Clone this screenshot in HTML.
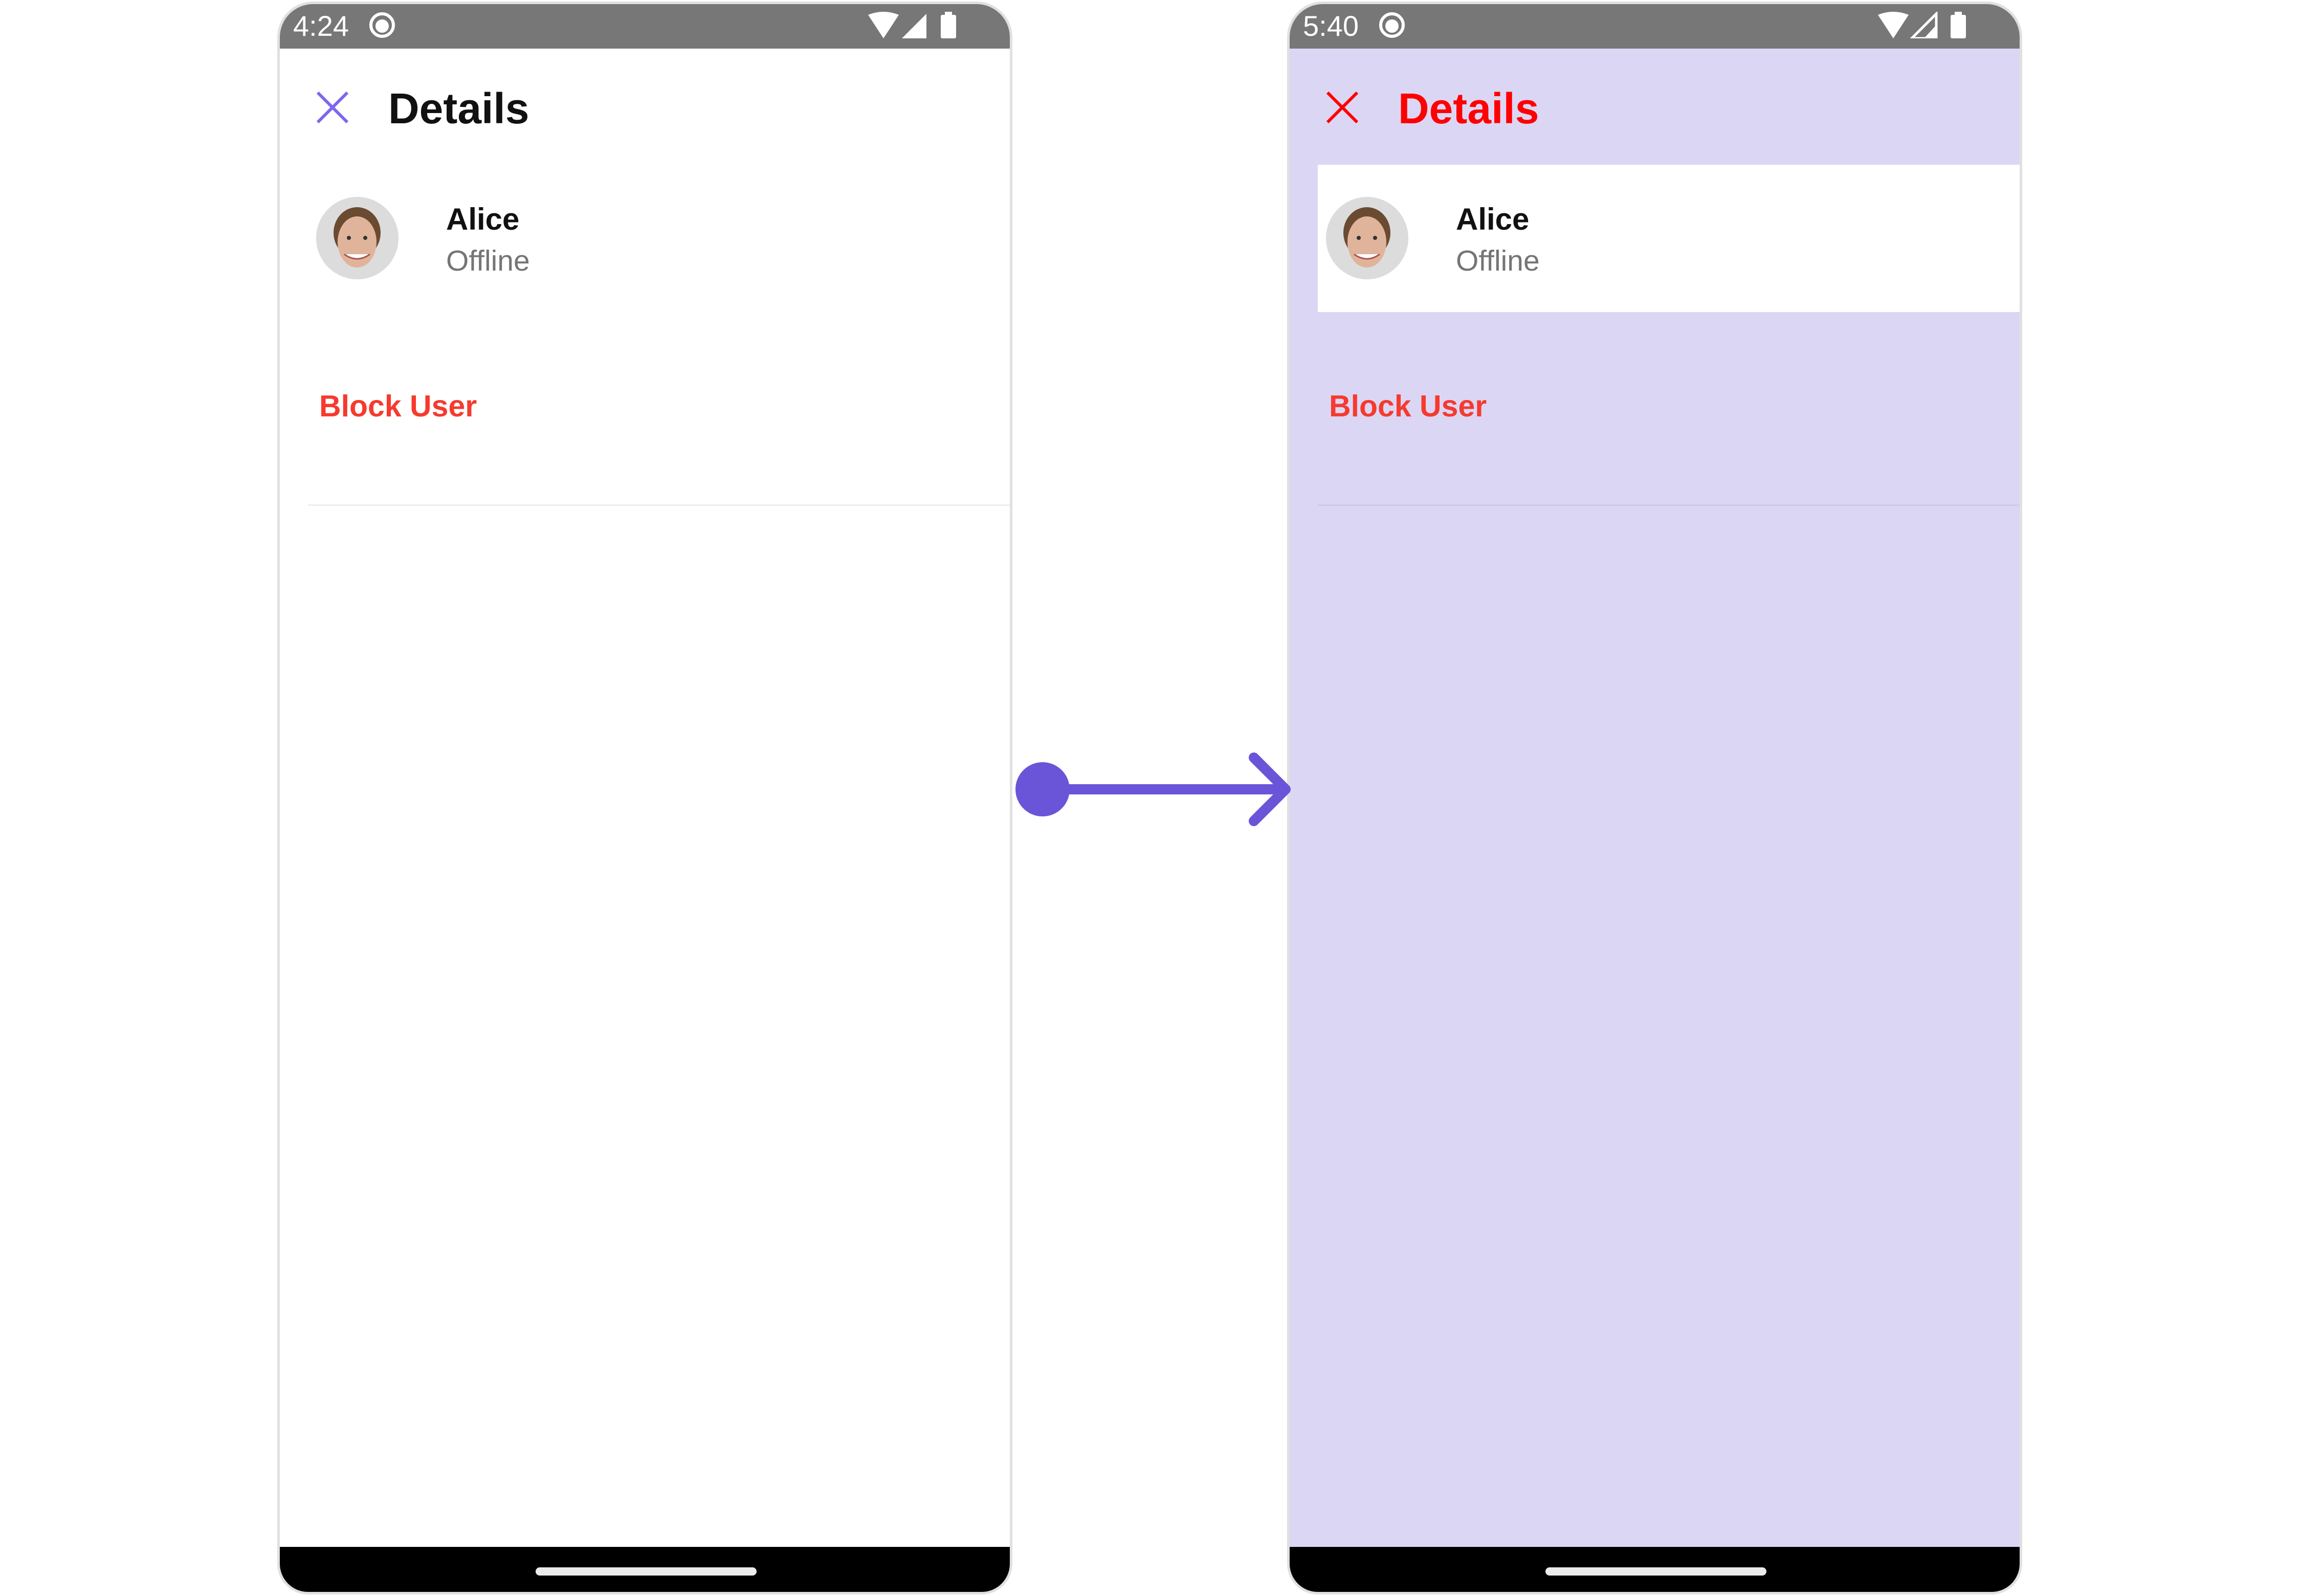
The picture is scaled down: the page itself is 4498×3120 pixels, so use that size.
<!DOCTYPE html>
<html><head><meta charset="utf-8"><style>
*{margin:0;padding:0;box-sizing:border-box}
body{width:4498px;height:3120px;background:#fff;position:relative;overflow:hidden;font-family:"Liberation Sans",Roboto,sans-serif}
.ph{position:absolute;top:3px;width:1437px;height:3114px;border:5px solid #e0e0e0;border-radius:70px 70px 60px 60px;overflow:hidden}
.sb{position:absolute;left:0;top:0;right:0;height:87px;background:#777}
.time{position:absolute;left:26px;top:10px;color:#fff;font-size:56px}
.nav{position:absolute;left:0;right:0;bottom:0;height:88px;background:#000}
.hi{position:absolute;left:500px;top:40px;width:432px;height:16px;border-radius:8px;background:#ebebeb}
.ab{position:absolute}
.title{position:absolute;left:212px;top:156px;font-size:84px;font-weight:bold}
.name{position:absolute;left:325px;top:386px;font-size:60px;font-weight:bold;color:#111}
.st{position:absolute;left:325px;top:469px;font-size:57px;color:#757575}
.blk{position:absolute;left:77px;top:752px;font-size:59px;font-weight:bold;color:#f63a2e}
.div{position:absolute;left:55px;right:0;top:978px;height:3px;background:#eee}
.av{position:absolute;left:71px;top:377px;width:161px;height:161px;border-radius:50%;background:#ddd;overflow:hidden}
</style></head><body>

<!-- LEFT PHONE -->
<div class="ph" style="left:542px;background:#fff">
 <div class="sb">
  <div class="time">4:24</div>
  <svg class="ab" style="left:174px;top:15px" width="52" height="52" viewBox="0 0 52 52"><circle cx="26" cy="26" r="22" fill="none" stroke="#fff" stroke-width="6"/><circle cx="26" cy="28" r="13" fill="#fff"/></svg>
  <svg class="ab" style="left:1148px;top:15px" width="180" height="52" viewBox="0 0 180 52"><path d="M2 6 Q32 -6 62 6 L32 52Z" fill="#fff"/><path d="M68 52 L116 52 L116 4Z" fill="#fff"/><rect x="144" y="6" width="30" height="46" rx="3" fill="#fff"/><rect x="152" y="0" width="14" height="8" fill="#fff"/></svg>
 </div>
 <svg class="ab" style="left:71px;top:170px" width="64" height="64" viewBox="0 0 64 64"><path d="M3 3L61 61M61 3L3 61" stroke="#7b68ee" stroke-width="6"/></svg>
 <div class="title" style="color:#111">Details</div>
 <div class="av"><svg width="161" height="161" viewBox="0 0 161 161"><rect width="161" height="161" fill="#dcdcdc"/><ellipse cx="80" cy="70" rx="46" ry="50" fill="#6b4a32"/><ellipse cx="80" cy="88" rx="38" ry="50" fill="#e0b49a"/><path d="M55 112 Q80 130 105 112" fill="#fff" stroke="#a55" stroke-width="3"/><circle cx="64" cy="80" r="4" fill="#333"/><circle cx="96" cy="80" r="4" fill="#333"/></svg></div>
 <div class="name">Alice</div>
 <div class="st">Offline</div>
 <div class="blk">Block User</div>
 <div class="div"></div>
 <div class="nav"><div class="hi"></div></div>
</div>

<!-- RIGHT PHONE -->
<div class="ph" style="left:2516px;background:#dcd6f5">
 <div class="sb">
  <div class="time">5:40</div>
  <svg class="ab" style="left:174px;top:15px" width="52" height="52" viewBox="0 0 52 52"><circle cx="26" cy="26" r="22" fill="none" stroke="#fff" stroke-width="6"/><circle cx="26" cy="28" r="13" fill="#fff"/></svg>
  <svg class="ab" style="left:1148px;top:15px" width="180" height="52" viewBox="0 0 180 52"><path d="M2 6 Q32 -6 62 6 L32 52Z" fill="#fff"/><path d="M68 52 L116 52 L116 4Z" fill="none" stroke="#fff" stroke-width="5"/><path d="M92 52 L116 52 L116 26Z" fill="#fff"/><rect x="144" y="6" width="30" height="46" rx="3" fill="#fff"/><rect x="152" y="0" width="14" height="8" fill="#fff"/></svg>
 </div>
 <svg class="ab" style="left:71px;top:170px" width="64" height="64" viewBox="0 0 64 64"><path d="M3 3L61 61M61 3L3 61" stroke="#f00" stroke-width="6"/></svg>
 <div class="title" style="color:#f00">Details</div>
 <div class="ab" style="left:55px;top:314px;right:0;height:288px;background:#fff"></div>
 <div class="av"><svg width="161" height="161" viewBox="0 0 161 161"><rect width="161" height="161" fill="#dcdcdc"/><ellipse cx="80" cy="70" rx="46" ry="50" fill="#6b4a32"/><ellipse cx="80" cy="88" rx="38" ry="50" fill="#e0b49a"/><path d="M55 112 Q80 130 105 112" fill="#fff" stroke="#a55" stroke-width="3"/><circle cx="64" cy="80" r="4" fill="#333"/><circle cx="96" cy="80" r="4" fill="#333"/></svg></div>
 <div class="name">Alice</div>
 <div class="st">Offline</div>
 <div class="blk">Block User</div>
 <div class="div" style="background:#cfc9e6"></div>
 <div class="nav"><div class="hi"></div></div>
</div>

<!-- ARROW -->
<svg class="ab" style="left:1980px;top:1470px;z-index:5" width="545" height="150" viewBox="1980 1470 545 150">
 <circle cx="2038" cy="1543" r="53" fill="#6a55d8"/>
 <path d="M2038 1543H2513" stroke="#6a55d8" stroke-width="20"/>
 <path d="M2451 1481L2513 1543L2451 1605" fill="none" stroke="#6a55d8" stroke-width="20" stroke-linecap="round" stroke-linejoin="round"/>
</svg>
</body></html>
